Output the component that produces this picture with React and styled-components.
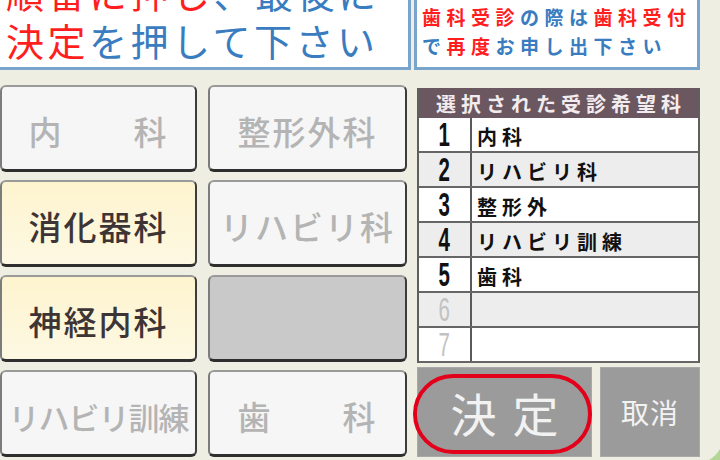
import React from 'react';
import styled, { createGlobalStyle, css } from 'styled-components';

const Global = createGlobalStyle`
  html, body { margin: 0; padding: 0; }
  body {
    width: 720px; height: 460px; overflow: hidden; background: #b3d697;
    font-family: "Noto Sans CJK JP", "Noto Sans", sans-serif;
  }
`;

const Stage = styled.div`
  width: 720px;
  height: 460px;
  overflow: hidden;
  background: #b3d697;
`;

const Panel = styled.div`
  width: 724px;
  height: 464px;
  box-sizing: border-box;
  padding-right: 24px;
  background: #efeee3;
  border-bottom-right-radius: 30px;
  display: flex;
  flex-direction: column;
`;

const Header = styled.div`
  display: flex;
  gap: 3px;
  height: 108px;
  margin-top: -38px;
  flex-shrink: 0;
`;

const NoticeBox = styled.div`
  box-sizing: border-box;
  background: #ffffff;
  border: 3px solid #79a5cc;
  display: flex;
  flex-direction: column;
  justify-content: flex-end;
  ${(p) =>
    p.$main
      ? css`
          width: 421px;
          margin-left: -10px;
          padding: 0 0 3px 13px;
          font-size: 38px;
          line-height: 48px;
          letter-spacing: 3.5px;
          font-weight: 400;
        `
      : css`
          flex: 1;
          padding: 0 0 7px 5px;
          font-size: 19px;
          line-height: 29px;
          letter-spacing: 5.5px;
          font-weight: 700;
        `}
`;

const Line = styled.div`
  white-space: nowrap;
  color: #3a7cc0;
`;

const Red = styled.span`
  color: #ff1e1e;
`;

const Body = styled.div`
  display: flex;
  margin-top: 15px;
`;

const Grid = styled.div`
  display: grid;
  grid-template-columns: 197px 199px;
  grid-auto-rows: 87px;
  gap: 8px 11px;
  width: 407px;
`;

const DeptButton = styled.div`
  box-sizing: border-box;
  border: 2px solid;
  border-bottom-width: 3px;
  border-color: #9a9a9a #3c3c3c #2e2e2e #7c7c7c;
  border-radius: 6px;
  display: flex;
  align-items: center;
  justify-content: center;
  padding-top: 6px;
  white-space: nowrap;
  font-weight: 500;
  font-size: ${(p) => (p.$tight ? '31px' : '33px')};
  letter-spacing: ${(p) => (p.$tight ? '-1px' : '2px')};
  ${(p) =>
    p.$state === 'on'
      ? css`
          background: linear-gradient(#fdf4cf, #fdf8e2);
          color: #3d3535;
        `
      : p.$state === 'empty'
      ? css`
          background: #c9c9c9;
        `
      : css`
          background: #f6f6f6;
          color: #b4b4b4;
        `}
`;

const Side = styled.div`
  margin-left: 10px;
  width: 283px;
  padding-top: 3px;
  display: flex;
  flex-direction: column;
`;

const Table = styled.div`
  box-sizing: border-box;
  border-left: 2px solid #5f5f5f;
  border-right: 2px solid #5f5f5f;
`;

const TableHead = styled.div`
  height: 30px;
  background: #6b5760;
  color: #f3ecef;
  font-size: 20px;
  font-weight: 700;
  letter-spacing: 5px;
  padding-left: 5px;
  display: flex;
  align-items: center;
  justify-content: center;
  white-space: nowrap;
`;

const Row = styled.div`
  box-sizing: border-box;
  display: grid;
  grid-template-columns: 53px 1fr;
  height: 35px;
  border-bottom: 2px solid #666;
  background: ${(p) => (p.$alt ? '#ededed' : '#ffffff')};
`;

const Num = styled.div`
  box-sizing: border-box;
  border-right: 2px solid #5a5a5a;
  display: flex;
  align-items: center;
  justify-content: center;
  font-family: "Liberation Sans", Arial, sans-serif;
  font-size: 33px;
  line-height: 33px;
  color: ${(p) => (p.$dim ? '#c2c2c2' : '#111')};
  span {
    display: inline-block;
    transform: scaleX(0.62);
    font-weight: ${(p) => (p.$dim ? 400 : 700)};
  }
`;

const Item = styled.div`
  display: flex;
  align-items: center;
  padding: 3px 0 0 5px;
  font-size: 20px;
  font-weight: 700;
  letter-spacing: 5px;
  color: #111;
  white-space: nowrap;
`;

const Actions = styled.div`
  display: flex;
  gap: 8px;
  margin-top: 4px;
  height: 90px;
`;

const GrayButton = styled.div`
  position: relative;
  box-sizing: border-box;
  background: #9b9b9b;
  border: 1px solid #a9a9a9;
  color: #f2f2f2;
  display: flex;
  align-items: center;
  justify-content: center;
  white-space: nowrap;
  ${(p) =>
    p.$primary
      ? css`
          width: 175px;
          font-size: 46px;
          letter-spacing: 16px;
          padding-left: 16px;
          &::after {
            content: '';
            position: absolute;
            left: -5px;
            right: -1px;
            top: 6px;
            bottom: 2px;
            border: 4px solid #e3001b;
            border-radius: 44px;
          }
        `
      : css`
          width: 100px;
          font-size: 28px;
          letter-spacing: 1px;
        `}
`;

const depts = [
  { label: '内\u3000\u3000科', state: 'off' },
  { label: '整形外科', state: 'off' },
  { label: '消化器科', state: 'on' },
  { label: 'リハビリ科', state: 'off' },
  { label: '神経内科', state: 'on' },
  { label: '', state: 'empty' },
  { label: 'リハビリ訓練', state: 'off', tight: true },
  { label: '歯\u3000\u3000科', state: 'off' },
];

const chosen = ['内科', 'リハビリ科', '整形外', 'リハビリ訓練', '歯科', '', ''];

export default function App() {
  return (
    <Stage>
      <Global />
      <Panel>
        <Header>
          <NoticeBox $main>
            <Line>
              <Red>順番に押し</Red>、最後に
            </Line>
            <Line>
              <Red>決定</Red>を押して下さい
            </Line>
          </NoticeBox>
          <NoticeBox>
            <Line>
              <Red>歯科受診</Red>の際は<Red>歯科受付</Red>
            </Line>
            <Line>
              で<Red>再度</Red>お申し出下さい
            </Line>
          </NoticeBox>
        </Header>
        <Body>
          <Grid>
            {depts.map((d, i) => (
              <DeptButton key={i} $state={d.state} $tight={d.tight}>
                {d.label}
              </DeptButton>
            ))}
          </Grid>
          <Side>
            <Table>
              <TableHead>選択された受診希望科</TableHead>
              {chosen.map((c, i) => (
                <Row key={i} $alt={i % 2 === 1}>
                  <Num $dim={!c}>
                    <span>{i + 1}</span>
                  </Num>
                  <Item>{c}</Item>
                </Row>
              ))}
            </Table>
            <Actions>
              <GrayButton $primary>決定</GrayButton>
              <GrayButton>取消</GrayButton>
            </Actions>
          </Side>
        </Body>
      </Panel>
    </Stage>
  );
}
